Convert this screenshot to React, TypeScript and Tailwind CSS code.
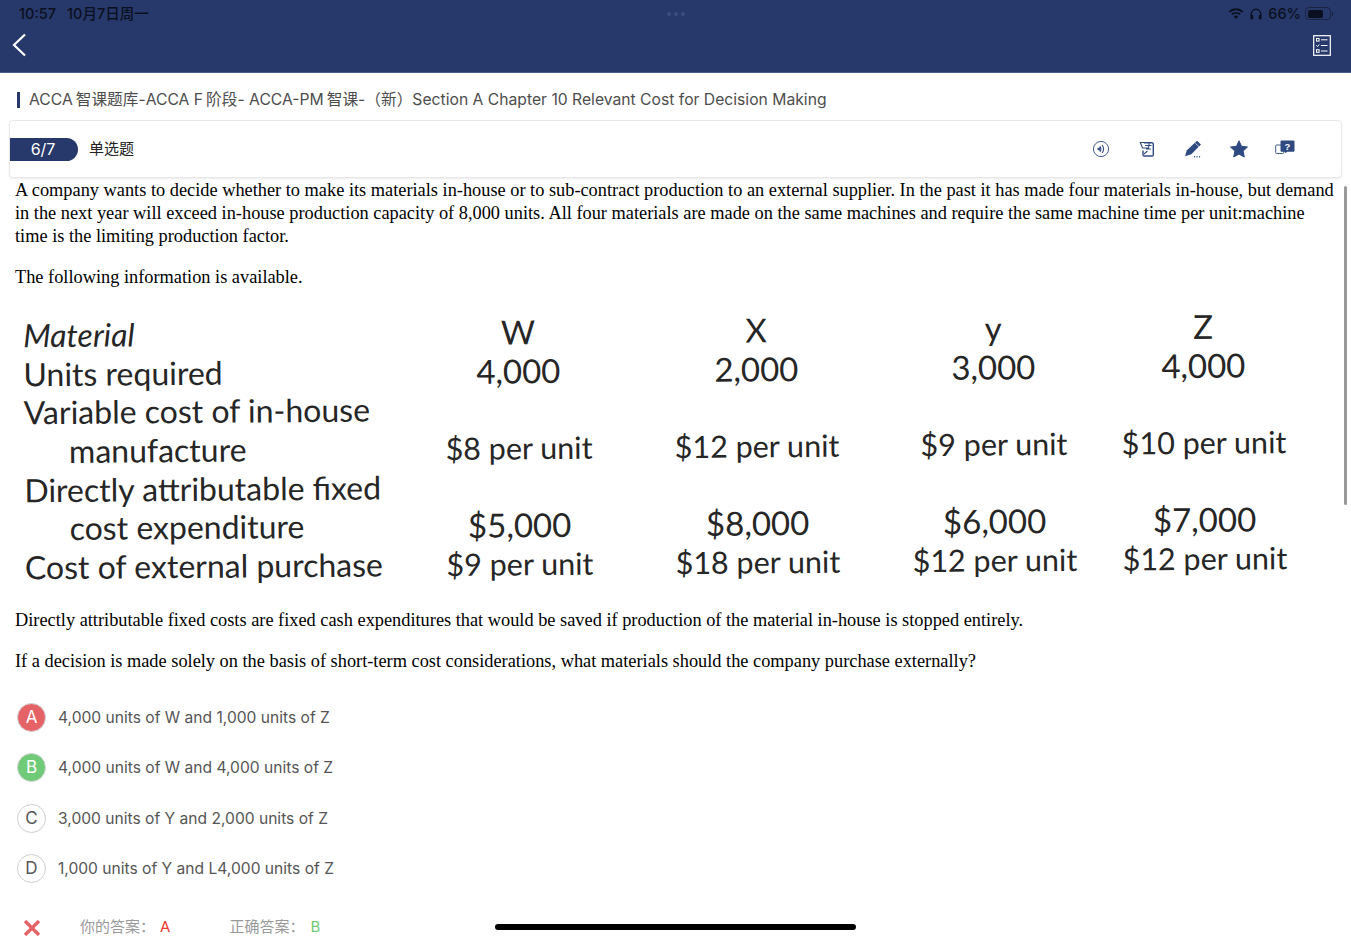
const sans = "font-['Inter','Noto_Sans_CJK_SC',sans-serif]";

function Wifi() {
  return (
    <svg width="16" height="12" viewBox="0 0 16 12" fill="#0b1020">
      <path d="M8 2.200c2.300 0 4.400.9 6 2.400l1.200-1.300C13.300 1.400 10.800.3 8 .3S2.700 1.400.8 3.300L2 4.600c1.600-1.500 3.700-2.400 6-2.400z" />
      <path d="M8 5.700c1.300 0 2.500.5 3.400 1.400l1.300-1.300C11.400 4.600 9.800 3.900 8 3.900s-3.400.7-4.700 1.900l1.300 1.300C5.500 6.200 6.700 5.700 8 5.700z" />
      <path d="M8 7.600c-.9 0-1.700.4-2.200.9L8 11l2.200-2.500c-.5-.5-1.300-.9-2.200-.9z" />
    </svg>
  );
}

function Phones() {
  return (
    <svg width="12" height="12" viewBox="0 0 12 12" fill="none">
      <path d="M1.300 8V6a4.700 4.700 0 0 1 9.400 0v2" stroke="#0b1020" strokeWidth="1.400" />
      <rect x="0.600" y="7" width="2.600" height="4.400" rx="1" fill="#0b1020" />
      <rect x="8.800" y="7" width="2.600" height="4.400" rx="1" fill="#0b1020" />
    </svg>
  );
}

function Checklist() {
  return (
    <svg width="18" height="21" viewBox="0 0 18 21" fill="none" stroke="#fff">
      <rect x="0.700" y="0.700" width="16.600" height="19.600" strokeWidth="1.200" />
      <rect x="3.500" y="3.500" width="2.600" height="2.600" strokeWidth="1" />
      <path d="M8 4.800h6.500M8 10.500h6.500M8 16h6.500" strokeWidth="1" />
      <path d="M3.300 10.300l1.200 1.200 1.800-2" strokeWidth="1" />
      <rect x="3.500" y="14.700" width="2.600" height="2.600" strokeWidth="1" />
    </svg>
  );
}

function ToolIcons() {
  const c = "#2f4a80";
  return (
    <div className="flex items-center gap-[26px]">
      <svg width="20" height="20" viewBox="0 0 20 20" fill="none" stroke={c}>
        <circle cx="10" cy="10" r="7.600" strokeWidth="0.900" />
        <path d="M9 7.300c1.100 1.700 1.100 3.700 0 5.400M11.200 6c1.700 2.500 1.700 5.500 0 8" strokeWidth="1.100" />
        <path d="M6.500 10l2-1.300v2.600z" fill={c} />
      </svg>
      <svg width="20" height="20" viewBox="0 0 20 20" fill="none" stroke={c}>
        <path d="M7 3.800h8a1.300 1.300 0 0 1 1.300 1.300v10.600a1.300 1.300 0 0 1-1.300 1.300H7.300A1.300 1.300 0 0 1 6 15.700V11.500" strokeWidth="1.400" />
        <path d="M3.300 3.500h9L11.500 9H5.500zM8 6.500h6.500M9 10h5M7 15l3.500-3" strokeWidth="1.100" />
      </svg>
      <svg width="20" height="20" viewBox="0 0 20 20" fill={c}>
        <path d="M14 1.800l4 3.700-9.700 9.800-6.300 2 1.900-6z" />
        <path d="M12.300 4.200l3.700 3.500" stroke="#fff" strokeWidth="0.700" />
        <circle cx="11.500" cy="17.800" r="0.700" />
        <circle cx="14" cy="17.800" r="0.700" />
        <circle cx="16.500" cy="17.800" r="0.700" />
      </svg>
      <svg width="20" height="20" viewBox="0 0 20 20" fill={c}>
        <path d="M10 1.800l2.500 5.500 6 .7-4.400 4.100 1.200 5.900L10 15.100l-5.300 2.900 1.200-5.900L1.500 8l6-.7z" stroke={c} strokeLinejoin="round" />
      </svg>
      <svg width="20" height="20" viewBox="0 0 20 20" fill="none">
        <rect x="0.700" y="6" width="8" height="8.500" rx="1" stroke={c} strokeWidth="0.900" />
        <path d="M5.500 2.500a1 1 0 0 1 1-1h12a1 1 0 0 1 1 1v9.200a1 1 0 0 1-1 1h-6.300l-1.400 1.300-1.400-1.300H6.500a1 1 0 0 1-1-1z" fill={c} />
        <text x="12.500" y="10.500" fontSize="9.500" fontWeight="700" fill="#fff" textAnchor="middle" fontFamily="Liberation Sans">?</text>
      </svg>
    </div>
  );
}

const rows = [
  { cells: ["Material", "W", "X", "y", "Z"], italic: true },
  { cells: ["Units required", "4,000", "2,000", "3,000", "4,000"] },
  { cells: ["Variable cost of in-house", "", "", "", ""] },
  { cells: ["manufacture", "$8 per unit", "$12 per unit", "$9 per unit", "$10 per unit"], indent: true, unit: true },
  { cells: ["Directly attributable fixed", "", "", "", ""] },
  { cells: ["cost expenditure", "$5,000", "$8,000", "$6,000", "$7,000"], indent: true },
  { cells: ["Cost of external purchase", "$9 per unit", "$18 per unit", "$12 per unit", "$12 per unit"], unit: true },
];

const options = [
  { l: "A", t: "4,000 units of W and 1,000 units of Z", c: "bg-[#e56366] text-white border-[#d4d4d4]" },
  { l: "B", t: "4,000 units of W and 4,000 units of Z", c: "bg-[#70cb78] text-white border-[#d4d4d4]" },
  { l: "C", t: "3,000 units of Y and 2,000 units of Z", c: "bg-white text-[#555] border-[#cfcfcf]" },
  { l: "D", t: "1,000 units of Y and L4,000 units of Z", c: "bg-white text-[#555] border-[#cfcfcf]" },
];

export default function App() {
  return (
    <div className={`relative w-[1351px] h-[939px] overflow-hidden bg-white ${sans}`}>
      <header className="h-[73px] bg-[#27386a] border-b border-[#4a5c8c] flex flex-col">
        <div className="h-[27px] pl-[19px] pr-[18px] flex items-center text-[14.500px] font-medium text-[#0b1020]">
          <div className="flex-1 flex gap-[11px]">
            <span>10:57</span>
            <span>10月7日周一</span>
          </div>
          <div className="flex gap-[3px] items-center">
            <span className="block w-1 h-1 rounded-full bg-[#3d4e7e]" />
            <span className="block w-1 h-1 rounded-full bg-[#3d4e7e]" />
            <span className="block w-1 h-1 rounded-full bg-[#3d4e7e]" />
          </div>
          <div className="flex-1 flex justify-end items-center">
            <Wifi />
            <span className="ml-[6px]"><Phones /></span>
            <span className="ml-[6px]">66%</span>
            <div className="ml-[4px] flex items-center gap-[1px]">
              <div className="w-[26px] h-[13px] rounded-[4px] border border-[#0b1020]/50 p-[1.500px]">
                <div className="h-full w-[15px] rounded-[2px] bg-[#0b1020]" />
              </div>
              <div className="w-[1px] h-[4px] bg-[#0b1020]/60" />
            </div>
          </div>
        </div>
        <div className="flex items-center justify-between pl-[12px] pr-[20px] h-[36px]">
          <svg width="14" height="24" viewBox="0 0 14 24" fill="none" stroke="#fff" strokeWidth="2.200">
            <path d="M13 1.500L2 12l11 10.500" />
          </svg>
          <Checklist />
        </div>
      </header>

      <div className="h-[47px] pt-[7px] pl-[17px] flex items-center gap-[9px] text-[15.700px] text-[#4d4d4d]">
        <span className="block w-[3px] h-[16px] bg-[#27386a]" />
        <span className="whitespace-nowrap">
          ACCA<span className="ml-[3px]">智课题库</span>-ACCA F<span className="ml-[3px]">阶段</span>- ACCA-PM<span className="ml-[3px]">智课</span>-（新）Section A Chapter 10 Relevant Cost for Decision Making
        </span>
      </div>

      <div className="ml-[9px] mr-[9px] h-[58px] border border-[#e8e8e8] rounded-[4px] shadow-[0_1px_2px_rgba(0,0,0,0.08)] flex items-center justify-between pr-[46px]">
        <div className="flex items-center">
          <div className="w-[68px] h-[23px] rounded-r-full bg-[#27386a] text-white text-[16px] flex items-center justify-center pr-[2px]">6/7</div>
          <span className="ml-[11px] text-[15px] text-[#222]">单选题</span>
        </div>
        <ToolIcons />
      </div>

      <div className="px-[15px] font-['Liberation_Serif',serif] text-[18.330px] leading-[23px] text-black">
        <p className="pt-[1px]">
          A company wants to decide whether to make its materials in-house or to sub-contract production to an external supplier. In the past it has made four materials in-house, but demand in the next year will exceed in-house production capacity of 8,000 units. All four materials are made on the same machines and require the same machine time per unit:machine time is the limiting production factor.
        </p>
        <p className="mt-[18px]">The following information is available.</p>

        <div className="mt-[22px] ml-[9px] rotate-[-0.46deg] font-['Lato',sans-serif] text-[33px] leading-[38.700px] text-[#262626] grid grid-cols-[376px_238px_238px_236px_184px]">
          {rows.map((r, i) =>
            r.cells.map((c, j) => (
              <div
                key={`${i}-${j}`}
                className={`whitespace-nowrap h-[38.700px] ${j > 0 ? "text-center" : "text-[32px]"} ${r.unit && j > 0 ? "text-[30.500px]" : ""} ${r.italic && j === 0 ? "italic" : ""} ${r.indent && j === 0 ? "pl-[45px]" : ""}`}
              >
                {c}
              </div>
            ))
          )}
        </div>

        <p className="mt-[27px]">Directly attributable fixed costs are fixed cash expenditures that would be saved if production of the material in-house is stopped entirely.</p>
        <p className="mt-[18px]">If a decision is made solely on the basis of short-term cost considerations, what materials should the company purchase externally?</p>
      </div>

      <div className="mt-[30px] pl-[17px] flex flex-col gap-[21.500px]">
        {options.map((o) => (
          <div key={o.l} className="flex items-center gap-[12px] h-[29px]">
            <div className={`w-[29px] h-[29px] rounded-full border-[1.500px] flex items-center justify-center text-[17px] ${o.c}`}>{o.l}</div>
            <span className="text-[15.600px] text-[#555]">{o.t}</span>
          </div>
        ))}
      </div>

      <div className="mt-[33px] pl-[23px] flex items-center text-[15px] text-[#999]">
        <svg width="18" height="16" viewBox="0 0 18 16" fill="none" stroke="#e56366" strokeWidth="3.400">
          <path d="M2 1l14 14M16 1L2 15" />
        </svg>
        <span className="ml-[39px]">你的答案：</span>
        <span className="ml-[5px] text-[#f03a2e]">A</span>
        <span className="ml-[59px]">正确答案：</span>
        <span className="ml-[6px] text-[#70cb78]">B</span>
      </div>

      <div className="absolute right-[4px] top-[186px] w-[3px] h-[319px] rounded-full bg-[#9a9a9a]" />
      <div className="absolute left-[495px] top-[924px] w-[361px] h-[6px] rounded-full bg-black" />
    </div>
  );
}
